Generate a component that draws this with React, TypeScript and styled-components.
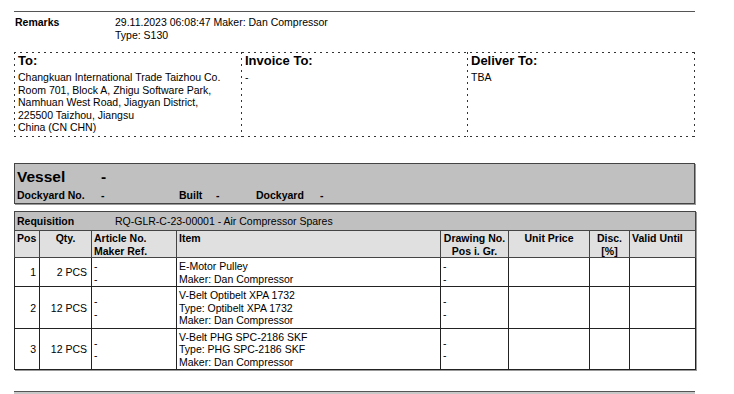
import styled, { createGlobalStyle } from "styled-components";

const GlobalStyle = createGlobalStyle`
  body {
    margin: 0;
    background: #fff;
    color: #000;
    font-family: "Liberation Sans", Arial, sans-serif;
  }
`;

const dashH = (pos: string) =>
  `repeating-linear-gradient(90deg, #333 0 2px, transparent 2px 6px) ${pos} / 100% 1px no-repeat`;
const dashV = (pos: string) =>
  `repeating-linear-gradient(180deg, #333 0 2px, transparent 2px 6px) ${pos} / 1px 100% no-repeat`;

const Page = styled.div`
  width: 681px;
  padding: 11px 0 0 14px;
  font-size: 10.5px;
  line-height: 12.5px;
`;

const Rule = styled.div`
  height: 1px;
  background: #555;
`;

const RemarksRow = styled.div`
  display: grid;
  grid-template-columns: 100px 1fr;
  margin-top: 4px;
  padding-left: 1px;
`;

const Bold = styled.div`
  font-weight: bold;
`;

const AddressBox = styled.div`
  margin-top: 11px;
  height: 85px;
  display: grid;
  grid-template-columns: 227px 226px 228px;
  background: ${dashH("left top")}, ${dashH("left bottom")}, ${dashV("right top")};
`;

const AddressCol = styled.div`
  padding: 1px 3px 0 4px;
  background: ${dashV("left top")};
`;

const AddressTitle = styled.div`
  font-size: 13px;
  line-height: 15px;
  font-weight: bold;
  margin-bottom: 3px;
`;

const VesselBox = styled.div`
  margin-top: 26px;
  height: 41px;
  box-sizing: border-box;
  border: 1px solid #444;
  box-shadow: 1px 1px 0 #999;
  background: #c0c0c0;
  padding: 4px 2px 0;
  font-weight: bold;
`;

const VesselLine = styled.div<{ $big?: boolean }>`
  display: flex;
  font-size: ${(p) => (p.$big ? "15.5px" : "10.5px")};
  line-height: ${(p) => (p.$big ? "18px" : "12.5px")};
  margin-top: ${(p) => (p.$big ? "0" : "3px")};
`;

const Field = styled.span<{ $w?: number }>`
  width: ${(p) => (p.$w ? `${p.$w}px` : "auto")};
  flex: none;
`;

const Table = styled.table`
  margin-top: 7px;
  width: 681px;
  border-collapse: collapse;
  table-layout: fixed;
  box-shadow: 1px 1px 0 #999;
`;

const ReqCell = styled.td`
  height: 18px;
  padding: 0 2px;
  background: #c0c0c0;
  border: 1px solid #444;
  vertical-align: middle;
`;

const ReqLine = styled.div`
  display: flex;
`;

const Th = styled.th<{ $align?: string }>`
  height: 24px;
  padding: 1px 2px 0;
  background: #e0e0e0;
  border: 1px solid #444;
  font-weight: bold;
  text-align: ${(p) => p.$align || "left"};
  vertical-align: top;
`;

const Td = styled.td<{ $align?: string; $pr?: number }>`
  padding: 2px ${(p) => p.$pr ?? 2}px 1px 2px;
  border: 1px solid #222;
  text-align: ${(p) => p.$align || "left"};
  vertical-align: middle;
  white-space: nowrap;
`;

const BottomBar = styled.div`
  margin-top: 21px;
  height: 20px;
  border-top: 1px solid #555;
  background: #c8c8c8;
`;

const rows = [
  { pos: 1, qty: "2 PCS", item: ["E-Motor Pulley", "Maker: Dan Compressor"] },
  {
    pos: 2,
    qty: "12 PCS",
    item: ["V-Belt Optibelt XPA 1732", "Type: Optibelt XPA 1732", "Maker: Dan Compressor"],
  },
  {
    pos: 3,
    qty: "12 PCS",
    item: ["V-Belt PHG SPC-2186 SKF", "Type: PHG SPC-2186 SKF", "Maker: Dan Compressor"],
  },
];

export default function App() {
  return (
    <Page>
      <GlobalStyle />
      <Rule />
      <RemarksRow>
        <Bold>Remarks</Bold>
        <div>
          29.11.2023 06:08:47 Maker: Dan Compressor
          <br />
          Type: S130
        </div>
      </RemarksRow>

      <AddressBox>
        <AddressCol>
          <AddressTitle>To:</AddressTitle>
          Changkuan International Trade Taizhou Co.
          <br />
          Room 701, Block A, Zhigu Software Park,
          <br />
          Namhuan West Road, Jiagyan District,
          <br />
          225500 Taizhou, Jiangsu
          <br />
          China (CN CHN)
        </AddressCol>
        <AddressCol>
          <AddressTitle>Invoice To:</AddressTitle>-
        </AddressCol>
        <AddressCol>
          <AddressTitle>Deliver To:</AddressTitle>TBA
        </AddressCol>
      </AddressBox>

      <VesselBox>
        <VesselLine $big>
          <Field $w={84}>Vessel</Field>
          <Field>-</Field>
        </VesselLine>
        <VesselLine>
          <Field $w={84}>Dockyard No.</Field>
          <Field $w={78}>-</Field>
          <Field $w={37}>Built</Field>
          <Field $w={40}>-</Field>
          <Field $w={64}>Dockyard</Field>
          <Field>-</Field>
        </VesselLine>
      </VesselBox>

      <Table>
        <colgroup>
          <col style={{ width: 25 }} />
          <col style={{ width: 52 }} />
          <col style={{ width: 85 }} />
          <col style={{ width: 264 }} />
          <col style={{ width: 68 }} />
          <col style={{ width: 81 }} />
          <col style={{ width: 40 }} />
          <col style={{ width: 66 }} />
        </colgroup>
        <tbody>
          <tr>
            <ReqCell colSpan={8}>
              <ReqLine>
                <Field as={Bold} $w={98}>
                  Requisition
                </Field>
                <span>RQ-GLR-C-23-00001 - Air Compressor Spares</span>
              </ReqLine>
            </ReqCell>
          </tr>
          <tr>
            <Th>Pos</Th>
            <Th $align="center">Qty.</Th>
            <Th>
              Article No.
              <br />
              Maker Ref.
            </Th>
            <Th>Item</Th>
            <Th $align="center">
              Drawing No.
              <br />
              Pos i. Gr.
            </Th>
            <Th $align="center">Unit Price</Th>
            <Th $align="center">
              Disc.
              <br />
              [%]
            </Th>
            <Th>Valid Until</Th>
          </tr>
          {rows.map((r) => (
            <tr key={r.pos}>
              <Td $align="right" $pr={3}>
                {r.pos}
              </Td>
              <Td $align="right" $pr={4}>
                {r.qty}
              </Td>
              <Td>
                -
                <br />-
              </Td>
              <Td>
                {r.item.map((line, i) => (
                  <div key={i}>{line}</div>
                ))}
              </Td>
              <Td>
                -
                <br />-
              </Td>
              <Td />
              <Td />
              <Td />
            </tr>
          ))}
        </tbody>
      </Table>

      <BottomBar />
    </Page>
  );
}
